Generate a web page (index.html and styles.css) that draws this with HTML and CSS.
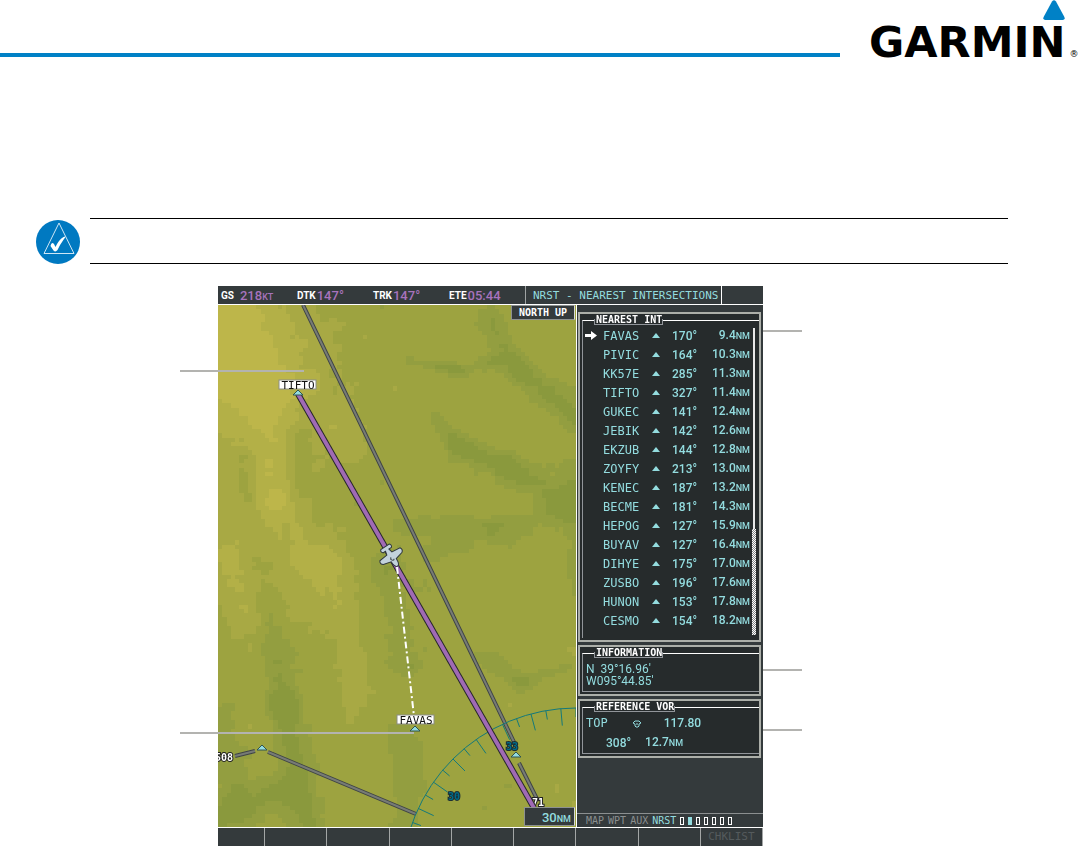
FILE: index.html
```html
<!DOCTYPE html>
<html lang="en">
<head>
    <meta charset="UTF-8">
    <meta name="viewport" content="width=device-width, initial-scale=1.0">
    <title>Nearest Intersections</title>
    <link rel="stylesheet" href="styles.css">
</head>
<body>
    <header class="page-header">
        <div class="rule"></div>
        <div class="logo">
            <svg class="logo-mark" viewBox="0 0 24 21"><path d="M10 1.5Q12-1.2 14 1.5L22.4 17Q23.4 20 20.6 20H3.4Q.6 20 1.6 17Z" fill="#0081c6"/></svg>
            <span class="logo-name">GARMIN</span><span class="logo-reg">®</span>
        </div>
    </header>

    <div class="note">
        <svg class="note-icon" viewBox="0 0 46 46">
            <circle cx="23" cy="24" r="22" fill="#0079c1"/>
            <path d="M24 5L39 35.500H9Z" fill="none" stroke="#cfe6f5" stroke-width="1"/>
            <path d="M15.500 28Q16.500 23.500 19 26L20.500 29Q24 21.500 28.500 19Q32 17.500 29 21Q25 26.500 22.500 32Q20.500 34.500 18.500 32.500Z" fill="#fff"/>
        </svg>
        <div class="note-body"></div>
    </div>

    <main class="figure">
        <div class="screen">
            <div class="top-bar">
                <div class="fields">
                    <div class="field wide"><span>GS</span><b>218<small>KT</small></b></div>
                    <div class="field"><span>DTK</span><b>147°</b></div>
                    <div class="field"><span>TRK</span><b>147°</b></div>
                    <div class="field"><span>ETE</span><b>05:44</b></div>
                </div>
                <h1>NRST - NEAREST INTERSECTIONS</h1>
                <div class="top-end"></div>
            </div>

            <div class="map">
                <canvas id="terrain" width="84" height="122"></canvas>
                <svg class="overlay" viewBox="0 0 358 522" preserveAspectRatio="xMidYMid slice">
                    <g class="airway-edge">
                        <path d="M85 0L296 437M301 458L320 496M50 447L198 509M17 451L37 446"/>
                    </g>
                    <g class="airway">
                        <path d="M85 0L296 437M301 458L320 496M50 447L198 509M17 451L37 446"/>
                    </g>
                    <g id="compass" class="compass">
                        <circle cx="358" cy="577" r="174"/>
                    </g>
                    <text class="compass-label" x="288" y="445">33</text>
                    <text class="compass-label" x="230" y="495">30</text>
                    <text class="airway-text" x="-3" y="456">508</text>
                    <text class="airway-text" x="314" y="501">71</text>
                    <path class="course-edge" d="M80 89L316 503"/>
                    <path class="course" d="M80 89L316 503"/>
                    <path class="direct" d="M179 262L197 420"/>
                    <g class="fix">
                        <path d="M80 85L85 90H75Z"/>
                        <path d="M197 421L202 426H192Z"/>
                        <path d="M44 440L49 445H39Z"/>
                        <path d="M298 447L303 452H293Z"/>
                    </g>
                    <g class="plane" transform="translate(173 251) rotate(147)">
                        <path d="M0-12C2-12 3-9 3-5L11-3Q14-1 12 2L3 3L2 7L5 7Q7 9 5 11H-5Q-7 9-5 7L-2 7L-3 3L-12 2Q-14-1-11-3L-3-5C-3-9-2-12 0-12Z"/>
                        <path d="M-1-4Q0-6 2-3L1-1" fill="none"/>
                    </g>
                    <rect class="tag" x="61" y="75" width="37" height="9"/>
                    <text class="tag-text" x="80" y="84">TIFTO</text>
                    <rect class="tag" x="179" y="410" width="37" height="9"/>
                    <text class="tag-text" x="198" y="419">FAVAS</text>
                </svg>
                <div class="map-label north">NORTH UP</div>
                <div class="map-label range"><span>30<small>NM</small></span></div>
            </div>

            <aside class="panel">
                <section class="box">
                    <div class="group tall">
                        <h2>NEAREST INT</h2>
                        <table>
                            <tbody id="nearest"></tbody>
                        </table>
                        <div class="scroll"><i></i></div>
                    </div>
                </section>
                <section class="box">
                    <div class="group info">
                        <h2>INFORMATION</h2>
                        <p>N&nbsp; 39°16.96'</p>
                        <p>W095°44.85'</p>
                    </div>
                </section>
                <section class="box">
                    <div class="group vor">
                        <h2>REFERENCE VOR</h2>
                        <div class="vor-row">
                            <span class="ident">TOP</span>
                            <svg viewBox="0 0 10 8"><path d="M1 3L3 1H7L9 3L7 4V6L6 7H4L3 6V4ZM4 4H6" fill="none" stroke="#93dcdf"/></svg>
                            <span>117.80</span>
                        </div>
                        <div class="vor-row second"><span>308°</span><span>12.7<small>NM</small></span></div>
                    </div>
                </section>
                <nav class="pages">
                    <a href="#map">MAP</a>
                    <a href="#wpt">WPT</a>
                    <a href="#aux">AUX</a>
                    <a href="#nrst" class="current">NRST</a>
                    <span class="dots"><i></i><i class="on"></i><i></i><i></i><i></i><i></i><i></i></span>
                </nav>
            </aside>

            <div class="softkeys">
                <button></button><button></button><button></button>
                <button></button><button></button><button></button>
                <button></button><button></button><button>CHKLIST</button>
            </div>
        </div>

        <div class="callout left track"></div>
        <div class="callout left nearest-fix"></div>
        <div class="callout right list"></div>
        <div class="callout right details"></div>
        <div class="callout right reference"></div>
    </main>

    <script src="script.js"></script>
</body>
</html>
```
FILE: styles.css
```css
* {
    box-sizing: border-box;
}
body {
    margin: 0;
    background: #fff;
    font-family: "DejaVu Sans Mono", monospace;
}
h1, h2, p {
    margin: 0;
    font-weight: normal;
}

/* page heading */
.page-header {
    display: flex;
    height: 70px;
}
.rule {
    flex: 1;
    height: 4px;
    margin-top: 53px;
    background: #0081c6;
}
.logo {
    position: relative;
    width: 240px;
    padding: 18px 0 0 29px;
    color: #000;
    font-family: "DejaVu Sans", sans-serif;
    white-space: nowrap;
}
.logo-mark {
    position: absolute;
    top: 0;
    right: 14px;
    width: 24px;
    height: 21px;
}
.logo-name {
    font-size: 43px;
    line-height: 48px;
    font-weight: bold;
}
.logo-reg {
    margin-left: 4px;
    font-size: 9px;
}

.note {
    display: flex;
    gap: 9px;
    margin: 148px 72px 0 35px;
}
.note-icon {
    width: 46px;
    height: 46px;
}
.note-body {
    flex: 1;
    height: 46px;
    border-top: 1px solid #000;
    border-bottom: 1px solid #000;
}

/* display */
.figure {
    position: relative;
    margin-top: 22px;
    padding: 0 317px 0 218px;
}
.screen {
    display: grid;
    grid-template-columns: 1fr 187px;
    background: #343a3c;
    color: #93dcdf;
}
.screen small {
    font-size: 9px;
}
.top-bar {
    grid-column: 1 / 3;
    display: flex;
    height: 19px;
    border-bottom: 1px solid #fff;
    line-height: 19px;
}
.fields {
    flex: 1;
    display: grid;
    grid-template-columns: repeat(4, 1fr);
    padding-left: 3px;
}
.field {
    display: flex;
    gap: 1px;
    white-space: nowrap;
}
.field.wide {
    gap: 6px;
}
.field span {
    color: #fff;
    font-size: 10px;
    font-family: Roboto, sans-serif;
    font-weight: bold;
}
.field b {
    color: #a873bd;
    font: 500 13px/19px Roboto, sans-serif;
}
h1 {
    width: 197px;
    padding-left: 7px;
    border-left: 1px solid #a0a4a4;
    border-right: 1px solid #fff;
    font-size: 11px;
    line-height: 19px;
    white-space: nowrap;
}
.top-end {
    width: 41px;
}

.map {
    position: relative;
    height: 522px;
    overflow: hidden;
    background: #9da340;
}
#terrain, .overlay {
    position: absolute;
    top: 0;
    left: 0;
    width: 100%;
    height: 100%;
}
#terrain {
    image-rendering: pixelated;
}
.overlay path, .overlay circle {
    fill: none;
}
.airway-edge {
    stroke: #3f4446;
    stroke-width: 4;
}
.airway {
    stroke: #777b75;
    stroke-width: 2;
}
.course-edge {
    stroke: #25262a;
    stroke-width: 6;
}
.course {
    stroke: #a06ab4;
    stroke-width: 4;
}
.direct {
    stroke: #fff;
    stroke-width: 2;
    stroke-dasharray: 7 3 2 3;
}
.compass {
    stroke: #14797a;
}
.compass-label {
    fill: #006c88;
    stroke: #1c2e33;
    stroke-width: 2;
    paint-order: stroke;
    font-size: 10px;
    font-weight: bold;
}
.overlay .fix path {
    fill: #93dcdf;
    stroke: #2f5552;
}
.overlay .plane path {
    stroke: #30383c;
}
.overlay .plane path:first-child {
    fill: #c3d2dc;
}
.tag {
    fill: #fff;
    stroke: #8b8d86;
}
.tag-text {
    font-size: 11px;
    text-anchor: middle;
    fill: #111;
}
.airway-text {
    font-size: 10px;
    font-weight: bold;
    fill: #fff;
    stroke: #222;
    stroke-width: 2;
    paint-order: stroke;
}
.map-label {
    position: absolute;
    right: 1px;
    background: #343a3c;
    border: 1px solid #8d9190;
    border-right-color: #d5d7d7;
}
.north {
    top: 0;
    width: 64px;
    height: 15px;
    color: #fff;
    font: bold 10px/13px "DejaVu Sans Mono", monospace;
    text-align: center;
    white-space: nowrap;
}
.range {
    bottom: 1px;
    width: 51px;
    height: 19px;
    padding-right: 3px;
    font: 500 13px/19px Roboto, sans-serif;
    text-align: right;
}

/* right-hand panel */
.panel {
    display: flex;
    flex-direction: column;
    gap: 3px;
    padding: 7px 2px 0 1px;
    border-left: 1px solid #fff;
}
.box {
    padding: 6px 0 2px 2px;
    border: 2px solid #acafa9;
    background: #262b2c;
}
.group {
    position: relative;
    border-top: 1px solid #fff;
    border-left: 1px solid #91959a;
    font-family: Roboto, sans-serif;
    font-size: 12px;
    font-weight: 500;
}
.group h2 {
    position: absolute;
    top: -6px;
    left: 11px;
    height: 10px;
    padding: 0 1px 0 2px;
    background: #262b2c;
    color: #fff;
    font: bold 10px/9px "DejaVu Sans Mono", monospace;
    white-space: nowrap;
}
/* lower half of the title tab */
.group h2::after {
    content: "";
    position: absolute;
    left: 0;
    right: 0;
    bottom: 0;
    height: 5px;
    border: 1px solid #91959a;
    border-top: 0;
}
.tall {
    height: 318px;
    padding-top: 5px;
}
table {
    width: 167px;
    border-collapse: collapse;
    table-layout: fixed;
}
td {
    height: 19px;
    padding: 0;
    line-height: 16px;
    white-space: nowrap;
}
td svg {
    display: block;
}
.mark {
    width: 20px;
    padding-left: 2px;
}
.mark svg {
    width: 12px;
    height: 9px;
}
.name {
    width: 49px;
    font-family: "DejaVu Sans Mono", monospace;
    font-weight: normal;
}
.symbol {
    width: 20px;
}
.symbol svg {
    width: 8px;
    height: 5px;
}
.bearing {
    width: 28px;
}
.distance {
    text-align: right;
}
.scroll {
    position: absolute;
    top: 7px;
    right: 3px;
    bottom: 4px;
    width: 4px;
}
.scroll::before {
    content: "";
    display: block;
    width: 2px;
    height: 201px;
    margin-left: 1px;
    background: #e8e8e8;
}
.scroll i {
    display: block;
    height: 106px;
    background: repeating-conic-gradient(#fff 0 25%, #85898a 0 50%) 0 0 / 2px 2px;
}
.info, .vor {
    padding-left: 3px;
    border-bottom: 1px solid #91959a;
}
.info {
    height: 39px;
    padding-top: 9px;
}
.info p {
    line-height: 12px;
}
.vor {
    height: 47px;
    padding-top: 6px;
}
.vor-row {
    display: flex;
    align-items: center;
    line-height: 19px;
}
.vor-row svg {
    width: 10px;
    height: 8px;
    margin: 0 22px 0 24px;
}
.ident {
    font-family: "DejaVu Sans Mono", monospace;
    font-weight: normal;
}
.second {
    gap: 14px;
    padding-left: 20px;
}
.pages {
    display: flex;
    align-items: center;
    gap: 4px;
    height: 14px;
    margin: auto -2px 0 -1px;
    padding-left: 9px;
    border-top: 1px solid #8b8f90;
    font-size: 10px;
}
.pages a {
    color: #8b8f90;
    text-decoration: none;
}
.pages .current {
    color: #93dcdf;
}
.dots {
    display: flex;
    gap: 4px;
}
.dots i {
    width: 4px;
    height: 8px;
    border: 1px solid #fff;
}
.dots .on {
    background: #93dcdf;
    border-color: #93dcdf;
}

.softkeys {
    grid-column: 1 / 3;
    display: grid;
    grid-template-columns: 47px repeat(8, 1fr);
    height: 19px;
    border-top: 1px solid #fff;
}
.softkeys button {
    min-width: 0;
    padding: 0;
    border: 0;
    border-right: 1px solid #a3a6a6;
    background: #343a3c;
    color: #555b5d;
    font: 11px/18px "DejaVu Sans Mono", monospace;
}

/* leader lines */
.callout {
    position: absolute;
    height: 2px;
    background: #b3b3b0;
}
.left {
    left: 180px;
}
.track {
    top: 84px;
    width: 124px;
}
.nearest-fix {
    top: 446px;
    width: 234px;
}
.right {
    right: 278px;
    width: 39px;
}
.list {
    top: 44px;
}
.details {
    top: 383px;
}
.reference {
    top: 443px;
}
```
FILE: script.js
```js
const fixes = [
    ['FAVAS', 170, '9.4'],
    ['PIVIC', 164, '10.3'],
    ['KK57E', 285, '11.3'],
    ['TIFTO', 327, '11.4'],
    ['GUKEC', 141, '12.4'],
    ['JEBIK', 142, '12.6'],
    ['EKZUB', 144, '12.8'],
    ['ZOYFY', 213, '13.0'],
    ['KENEC', 187, '13.2'],
    ['BECME', 181, '14.3'],
    ['HEPOG', 127, '15.9'],
    ['BUYAV', 127, '16.4'],
    ['DIHYE', 175, '17.0'],
    ['ZUSBO', 196, '17.6'],
    ['HUNON', 153, '17.8'],
    ['CESMO', 154, '18.2']
];

const arrow = '<svg viewBox="0 0 12 9"><path d="M0 3H6V0L12 4.500L6 9V6H0Z" fill="#fff"/></svg>';
const triangle = '<svg viewBox="0 0 8 5"><path d="M4 0L8 5H0Z" fill="#93dcdf"/></svg>';

document.getElementById('nearest').innerHTML = fixes.map(([name, bearing, distance], i) => `
    <tr>
        <td class="mark">${i === 0 ? arrow : ''}</td>
        <td class="name">${name}</td>
        <td class="symbol">${triangle}</td>
        <td class="bearing">${bearing}°</td>
        <td class="distance">${distance}<small>NM</small></td>
    </tr>`).join('');

// compass ticks every 5 degrees, alternating short and long
const compass = document.getElementById('compass');
let ticks = '';
for (let deg = 0; deg <= 80; deg += 5) {
    const a = deg * Math.PI / 180;
    const inner = 174 - (deg % 10 ? 17 : 9);
    ticks += `M${358 - 174 * Math.sin(a)} ${577 - 174 * Math.cos(a)}L${358 - inner * Math.sin(a)} ${577 - inner * Math.cos(a)}`;
}
const tickPath = document.createElementNS('http://www.w3.org/2000/svg', 'path');
tickPath.setAttribute('d', ticks);
compass.appendChild(tickPath);

// terrain: [x1, y1, x2, y2, radius, height]
const ridges = [
    [0, 0, 45, 80, 38, 2.4],
    [0, 0, 20, 70, 30, 1.5],
    [45, 80, 50, 190, 22, 2],
    [0, 60, 5, 230, 24, 1.3],
    [60, 0, 110, 130, 35, 1],
    [70, 190, 100, 260, 30, 1],
    [10, 260, 35, 310, 24, 1.5],
    [110, 250, 140, 390, 20, 1],
    [60, 230, 80, 300, 25, 0.8],
    [80, 130, 82, 180, 12, -1.2],
    [22, 150, 28, 190, 10, -1],
    [190, 55, 240, 64, 6, -1.2],
    [240, 64, 285, 52, 7, -1.2],
    [270, 10, 300, 65, 12, -1.4],
    [300, 60, 355, 110, 12, -1.7],
    [215, 112, 240, 140, 9, -1.4],
    [240, 140, 290, 162, 12, -1.7],
    [290, 162, 356, 200, 14, -1.8],
    [185, 220, 270, 218, 11, -1],
    [270, 228, 340, 205, 13, -1.1],
    [210, 245, 245, 235, 10, -1],
    [265, 350, 300, 375, 9, -1.1],
    [300, 375, 350, 360, 8, -0.9],
    [165, 260, 190, 360, 14, -1.2],
    [45, 290, 65, 400, 14, -1.5],
    [65, 400, 85, 520, 16, -1.7],
    [0, 510, 70, 480, 18, -1.6],
    [0, 410, 15, 500, 16, -1],
    [185, 430, 188, 520, 15, -1],
    [350, 160, 358, 280, 10, -1]
];
const colors = [[138, 153, 61], [147, 158, 64], [157, 163, 64], [168, 169, 68], [179, 176, 71], [189, 182, 74]];

function hash(x, y) {
    const n = Math.sin(x * 127.1 + y * 311.7) * 43758.5453;
    return n - Math.floor(n);
}

function noise(x, y) {
    const ix = Math.floor(x), iy = Math.floor(y);
    const fx = x - ix, fy = y - iy;
    const top = hash(ix, iy) * (1 - fx) + hash(ix + 1, iy) * fx;
    const bottom = hash(ix, iy + 1) * (1 - fx) + hash(ix + 1, iy + 1) * fx;
    return top * (1 - fy) + bottom * fy;
}

function height(x, y) {
    let h = 2.5;
    for (const [x1, y1, x2, y2, r, amount] of ridges) {
        const dx = x2 - x1, dy = y2 - y1;
        const t = Math.max(0, Math.min(1, ((x - x1) * dx + (y - y1) * dy) / (dx * dx + dy * dy)));
        const d = Math.hypot(x - x1 - t * dx, y - y1 - t * dy);
        h += amount * Math.exp(-(d * d) / (r * r));
    }
    return h + (noise(x / 16, y / 20) - 0.5) * 0.9 + (noise(x / 6, y / 6) - 0.5) * 0.6;
}

const ctx = document.getElementById('terrain').getContext('2d');
for (let y = 0; y < 122; y++) {
    for (let x = 0; x < 84; x++) {
        const level = Math.max(0, Math.min(5, Math.floor(height(x * 4.26, y * 4.28))));
        ctx.fillStyle = `rgb(${colors[level].join(',')})`;
        ctx.fillRect(x, y, 1, 1);
    }
}
```
